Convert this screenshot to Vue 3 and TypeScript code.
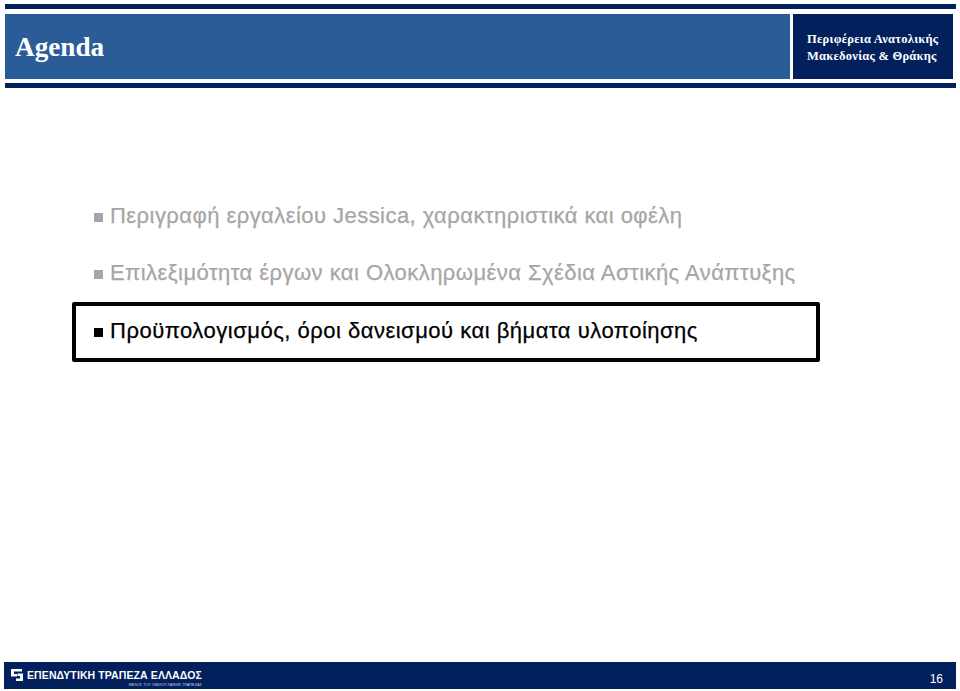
<script setup lang="ts">
const items: { text: string; active: boolean }[] = [
  { text: 'Περιγραφή εργαλείου Jessica, χαρακτηριστικά και οφέλη', active: false },
  { text: 'Επιλεξιμότητα έργων και Ολοκληρωμένα Σχέδια Αστικής Ανάπτυξης', active: false },
  { text: 'Προϋπολογισμός, όροι δανεισμού και βήματα υλοποίησης', active: true },
]
</script>

<template>
  <div class="slide">
    <header class="head">
      <div class="rule"></div>
      <div class="band">
        <div class="title">Agenda</div>
        <div class="region">Περιφέρεια Ανατολικής<br />Μακεδονίας &amp; Θράκης</div>
      </div>
      <div class="rule"></div>
    </header>

    <main class="agenda">
      <div v-for="item in items" :key="item.text" class="row" :class="{ active: item.active }">
        <span class="mark"></span>
        <span class="label">{{ item.text }}</span>
      </div>
    </main>

    <footer class="foot">
      <div class="brand">
        <svg class="logo" width="12" height="12" viewBox="0 0 12 12">
          <path d="M0 0H11V2.5H3V5H6V7.5H0Z" fill="#fff" />
          <path d="M12 12H5V9.5H9V7H6.5V4.5H12Z" fill="#fff" />
        </svg>
        <div class="names">
          <div class="bank">ΕΠΕΝΔΥΤΙΚΗ ΤΡΑΠΕΖΑ ΕΛΛΑΔΟΣ</div>
          <div class="group">ΜΕΛΟΣ ΤΟΥ ΟΜΙΛΟΥ ΛΑΪΚΗΣ ΤΡΑΠΕΖΑΣ</div>
        </div>
      </div>
      <div class="page">16</div>
    </footer>
  </div>
</template>

<style>
html, body { margin: 0; background: #fff; }
</style>

<style scoped>
.slide {
  width: 960px;
  height: 691px;
  display: flex;
  flex-direction: column;
  overflow: hidden;
  background: #fff;
  font-family: "Liberation Sans", Arial, sans-serif;
}
.head {
  margin: 4px 4px 0 5px;
  display: flex;
  flex-direction: column;
  gap: 5px;
}
.rule { height: 5px; background: #02205c; }
.rule:last-child { margin-top: -1px; }
.band { height: 65px; display: flex; margin-right: 3px; }
.title {
  flex: 1;
  background: #2a5d97;
  color: #fff;
  font-family: "Liberation Serif", serif;
  font-weight: 700;
  font-size: 27.2px;
  line-height: 66px;
  padding-left: 10px;
}
.region {
  width: 160px;
  margin-left: 3px;
  box-sizing: border-box;
  background: #02205c;
  color: #fff;
  font-family: "Liberation Serif", serif;
  font-weight: 700;
  font-size: 12.5px;
  line-height: 17px;
  letter-spacing: 0.25px;
  padding: 17px 0 0 14px;
  white-space: nowrap;
}
.agenda {
  flex: 1;
  display: flex;
  flex-direction: column;
  padding: 100px 0 0 72px;
}
.row {
  width: 748px;
  height: 57px;
  box-sizing: border-box;
  display: flex;
  align-items: center;
  gap: 7px;
  padding: 0 0 2px 22px;
  color: #a6a6a6;
  font-size: 22px;
  letter-spacing: 0.45px;
  -webkit-text-stroke: 0.25px currentColor;
  white-space: nowrap;
}
.mark { width: 9px; height: 9px; background: currentColor; margin-top: 3px; }
.label { display: block; }
.active {
  height: 60px;
  border: 4px solid #000;
  border-radius: 2px;
  padding: 0 0 3px 18px;
  color: #000;
  letter-spacing: 0.5px;
}
.foot {
  height: 27px;
  margin: 0 4px 2px 4px;
  background: #02205c;
  color: #fff;
  display: flex;
  justify-content: space-between;
}
.brand { display: flex; gap: 4px; padding: 7px 0 0 7px; }
.names { display: flex; flex-direction: column; align-items: flex-end; }
.bank { font-size: 10.5px; font-weight: 700; line-height: 13px; letter-spacing: 0.1px; white-space: nowrap; }
.group { font-size: 3.8px; line-height: 6px; color: #c9d2e4; white-space: nowrap; }
.page { font-size: 12px; line-height: 14px; padding: 10px 13px 0 0; }
</style>
